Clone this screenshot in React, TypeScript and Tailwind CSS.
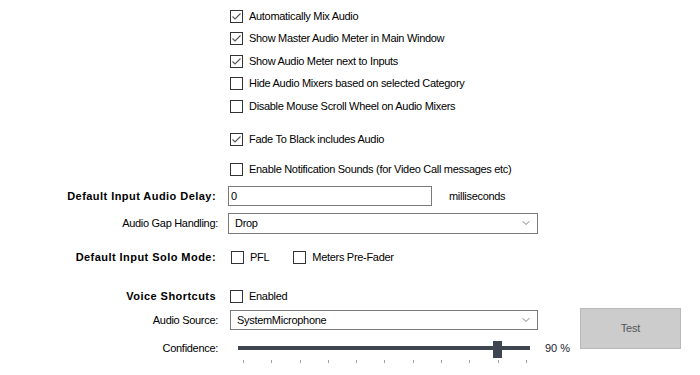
import { ChevronDown } from 'lucide-react'

const font = { fontFamily: '"Liberation Sans", Arial, sans-serif' }

function Box({ checked }: { checked?: boolean }) {
  return (
    <span className="w-[13px] h-[13px] shrink-0 border border-[#333333] bg-white flex items-center justify-center">
      {checked && (
        <svg width="11" height="11" viewBox="0 0 11 11">
          <polyline points="1.5,5.5 4,8 9.5,2.5" fill="none" stroke="#555555" strokeWidth="1.1" />
        </svg>
      )}
    </span>
  )
}

function Check({ label, checked, className = '' }: { label: string; checked?: boolean; className?: string }) {
  return (
    <div className={`flex items-center gap-[6px] ${className}`}>
      <Box checked={checked} />
      <span className="text-[11px] tracking-[-0.3px] text-black leading-none whitespace-nowrap">{label}</span>
    </div>
  )
}

function Label({ text, bold }: { text: string; bold?: boolean }) {
  return (
    <div
      className={`w-[218px] shrink-0 text-right text-[11px] text-black leading-none whitespace-nowrap ${
        bold ? 'font-bold tracking-[0.45px] pr-[2px]' : 'tracking-[-0.3px]'
      }`}
    >
      {text}
    </div>
  )
}

function Select({ value, className = '' }: { value: string; className?: string }) {
  return (
    <div className={`flex items-center shrink-0 border border-[#7a7a7a] bg-white pl-[6px] pr-[5px] ${className}`}>
      <span className="flex-1 text-[11px] tracking-[-0.3px] text-black leading-none">{value}</span>
      <ChevronDown className="w-[12px] h-[12px] text-[#505050]" strokeWidth={1.5} />
    </div>
  )
}

const ticks = Array.from({ length: 11 }, (_, i) => i)

export default function App() {
  return (
    <div className="w-[700px] h-[375px] bg-white overflow-hidden" style={font}>
      <div className="flex flex-col pt-[5px]">
        <div className="pl-[230px] flex flex-col">
          <Check className="h-[22.5px]" label="Automatically Mix Audio" checked />
          <Check className="h-[22.5px]" label="Show Master Audio Meter in Main Window" checked />
          <Check className="h-[22.5px]" label="Show Audio Meter next to Inputs" checked />
          <Check className="h-[22.5px]" label="Hide Audio Mixers based on selected Category" />
          <Check className="h-[22.5px]" label="Disable Mouse Scroll Wheel on Audio Mixers" />
          <Check className="h-[22px] mt-[10.5px]" label="Fade To Black includes Audio" checked />
          <Check className="h-[22px] mt-[8px]" label="Enable Notification Sounds (for Video Call messages etc)" />
        </div>

        {/* Delay */}
        <div className="flex items-center h-[22px] mt-[5px]">
          <Label text="Default Input Audio Delay:" bold />
          <div className="ml-[10px] w-[204px] h-[20px] shrink-0 border border-[#7a7a7a] flex items-center pl-[2px] text-[11px] text-black leading-none">
            0
          </div>
          <span className="ml-[17px] text-[11px] tracking-[-0.3px] text-black leading-none">milliseconds</span>
        </div>

        {/* Gap handling */}
        <div className="flex items-center h-[22px] mt-[5px]">
          <Label text="Audio Gap Handling:" />
          <Select value="Drop" className="ml-[10px] w-[310px] h-[21px]" />
        </div>

        {/* Solo mode */}
        <div className="flex items-center h-[22px] mt-[12px]">
          <Label text="Default Input Solo Mode:" bold />
          <Check className="ml-[13px]" label="PFL" />
          <Check className="ml-[24px]" label="Meters Pre-Fader" />
        </div>

        {/* Voice shortcuts */}
        <div className="flex items-center h-[22px] mt-[17px]">
          <Label text="Voice Shortcuts" bold />
          <Check className="ml-[12px]" label="Enabled" />
        </div>

        <div className="flex items-start mt-[2px]">
          <div className="w-[570px] shrink-0 flex flex-col">
            <div className="flex items-center h-[22px]">
              <Label text="Audio Source:" />
              <Select value="SystemMicrophone" className="ml-[12px] w-[308px] h-[20px]" />
            </div>
            <div className="flex items-center h-[22px] mt-[6px]">
              <Label text="Confidence:" />
              <div className="ml-[11px] w-[310px] shrink-0 relative pl-[9px] pr-[9px]">
                <div className="h-[4px] bg-[#3d4550] w-[292px]" />
                <div className="absolute left-[264px] top-[-5px] w-[9px] h-[17px] bg-[#3d4550]" />
              </div>
              <span className="ml-[6px] text-[11px] text-[#1a2030] leading-none whitespace-nowrap">90 %</span>
            </div>
            <div className="flex justify-between w-[284px] ml-[243px] mt-[1px]">
              {ticks.map((t) => (
                <span key={t} className="w-px h-[3px] bg-[#a0a0a0]" />
              ))}
            </div>
          </div>
          <button className="ml-[10px] mt-[-1px] w-[101px] h-[41px] bg-[#cccccc] border border-[#b8b8b8] text-[11px] text-[#555555] tracking-[-0.2px]">
            Test
          </button>
        </div>
      </div>
    </div>
  )
}
